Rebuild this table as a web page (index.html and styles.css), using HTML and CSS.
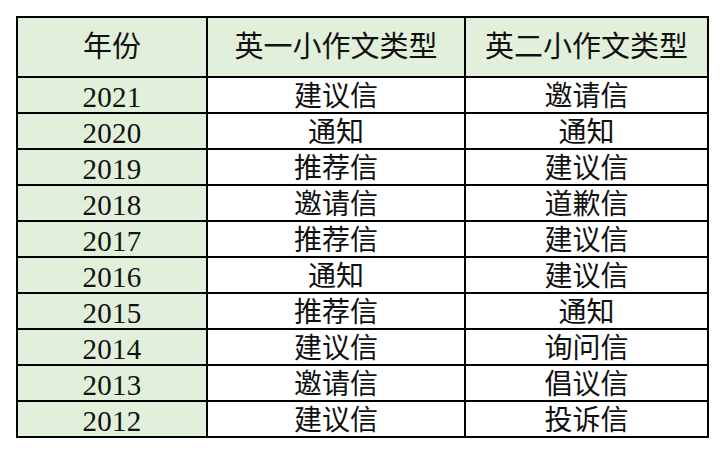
FILE: index.html
```html
<!DOCTYPE html>
<html lang="zh-CN">
<head>
<meta charset="utf-8">
<link rel="stylesheet" href="styles.css">
</head>
<body>
<table class="types">
  <colgroup>
    <col class="c-year">
    <col class="c-one">
    <col class="c-two">
  </colgroup>
  <thead>
    <tr class="head">
      <th class="year">年份</th>
      <th>英一小作文类型</th>
      <th>英二小作文类型</th>
    </tr>
  </thead>
  <tbody>
    <tr><td class="year">2021</td><td>建议信</td><td>邀请信</td></tr>
    <tr><td class="year">2020</td><td>通知</td><td>通知</td></tr>
    <tr><td class="year">2019</td><td>推荐信</td><td>建议信</td></tr>
    <tr><td class="year">2018</td><td>邀请信</td><td>道歉信</td></tr>
    <tr><td class="year">2017</td><td>推荐信</td><td>建议信</td></tr>
    <tr><td class="year">2016</td><td>通知</td><td>建议信</td></tr>
    <tr><td class="year">2015</td><td>推荐信</td><td>通知</td></tr>
    <tr><td class="year">2014</td><td>建议信</td><td>询问信</td></tr>
    <tr><td class="year">2013</td><td>邀请信</td><td>倡议信</td></tr>
    <tr><td class="year">2012</td><td>建议信</td><td>投诉信</td></tr>
  </tbody>
</table>
</body>
</html>
```
FILE: styles.css
```css
html, body {
  margin: 0;
  padding: 0;
  background: #ffffff;
}
body {
  padding: 16px 0 0 16px;
}
.types {
  border-collapse: collapse;
  table-layout: fixed;
  width: 691px;
  font-family: "Liberation Serif", "Noto Sans CJK SC", serif;
  font-size: 28px;
  color: #111;
}
.c-year { width: 190px; }
.c-one { width: 258px; }
.c-two { width: 243px; }
.types th,
.types td {
  border: 2px solid #000;
  padding: 0;
  text-align: center;
  font-weight: normal;
  line-height: 1;
}
.types th {
  height: 57px;
  font-size: 29px;
  background: #e2efda;
  padding-top: 1px;
}
.types td {
  height: 30px;
  padding-top: 4px;
  vertical-align: middle;
}
.types td.year {
  background: #e2efda;
  font-size: 29px;
  letter-spacing: 0.3px;
}
```
